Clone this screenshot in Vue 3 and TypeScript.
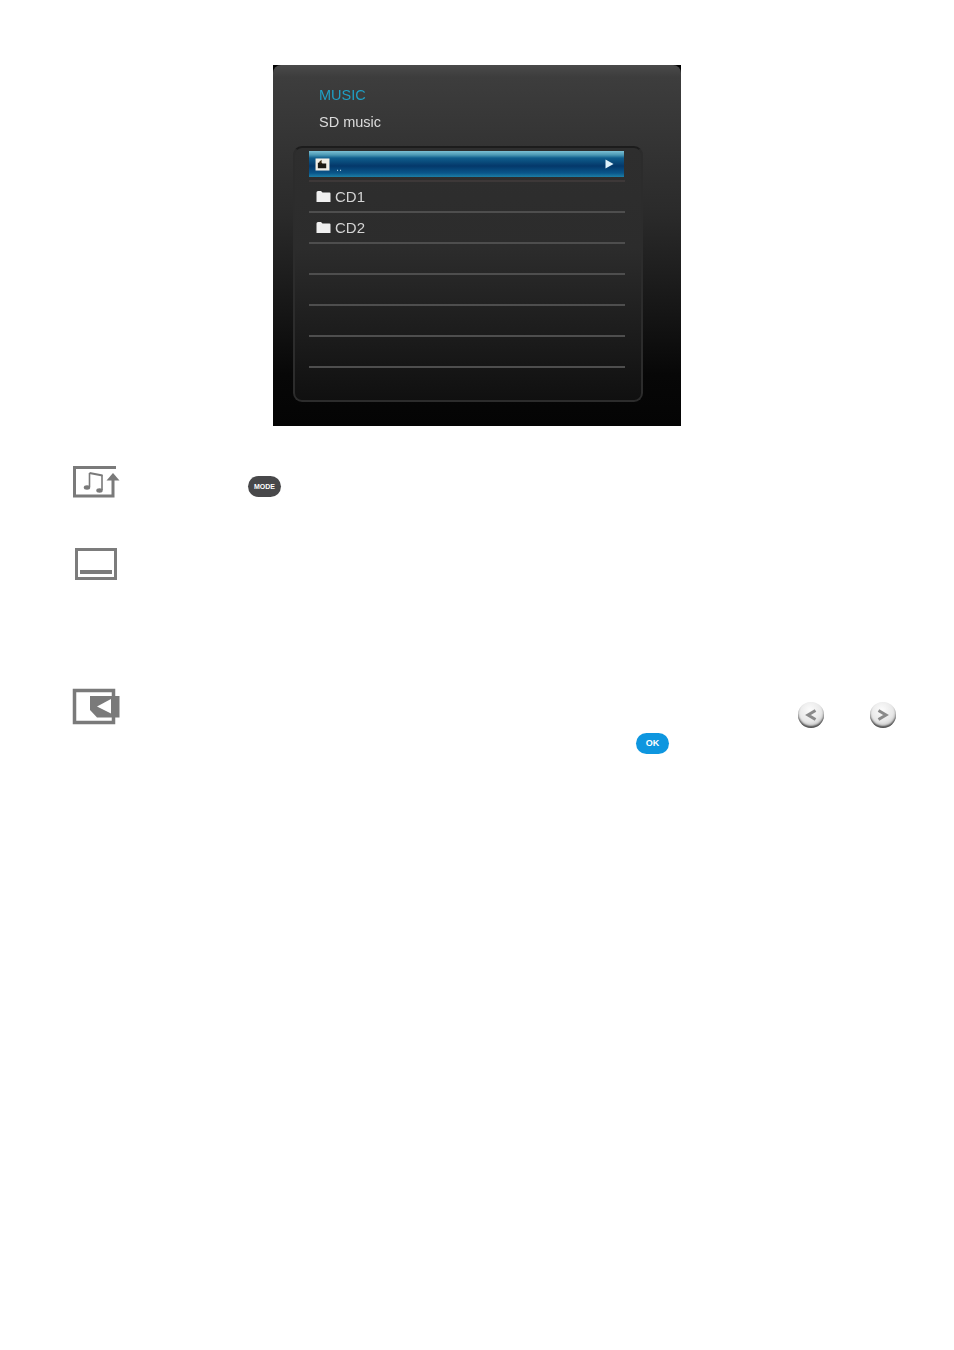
<script setup lang="ts">
const rows = ['CD1', 'CD2', '', '', '', '']
</script>

<template>
  <div class="page">
    <section class="screen">
      <div class="screen-inner">
        <div class="title">MUSIC</div>
        <div class="subtitle">SD music</div>
        <div class="panel">
          <div class="selected">
            <svg class="up-icon" width="16" height="14" viewBox="0 0 16 14">
              <rect x="0.500" y="0.500" width="15" height="13" fill="#f2efe6" />
              <path d="M3 5h4l1 1h4v5H3z" fill="#1c1a14" />
              <path d="M7 2l-3 2.500L7 7z" fill="#3a2a10" />
            </svg>
            <span class="dots">..</span>
            <svg class="play" width="9" height="10" viewBox="0 0 9 10"><path d="M0.500 0.500L8.500 5L0.500 9.500z" fill="#dff2fa" /></svg>
          </div>
          <div class="sep first"></div>
          <div v-for="(r, i) in rows" :key="i" class="row">
            <div class="row-body">
              <svg v-if="r" class="folder" width="15" height="13" viewBox="0 0 15 13">
                <path d="M0.500 2.500Q0.500 1 2 1H5L6.500 2.500H13.500Q14.500 2.500 14.500 3.500V12H0.500z" fill="#f0f0f0" />
              </svg>
              <span v-if="r" class="label">{{ r }}</span>
            </div>
            <div class="sep"></div>
          </div>
        </div>
      </div>
    </section>

    <div class="item item-music">
      <svg class="icon-music" width="50" height="34" viewBox="0 0 50 34">
        <path d="M44 2.500H2.500V31H41V14" fill="none" stroke="#7a7a7a" stroke-width="3" />
        <path d="M41 8l-6.500 7.500h13z" fill="#7a7a7a" />
        <path d="M17.500 8L30.500 10.500" stroke="#7a7a7a" stroke-width="2.200" fill="none" />
        <path d="M17.500 8V22M30 10V25" stroke="#7a7a7a" stroke-width="1.600" fill="none" />
        <ellipse cx="15" cy="22.500" rx="3.200" ry="2.200" fill="#7a7a7a" />
        <ellipse cx="27.500" cy="25.500" rx="3.200" ry="2.200" fill="#7a7a7a" />
      </svg>
      <div class="mode-btn">MODE</div>
    </div>

    <div class="item item-screen">
      <svg width="42" height="32" viewBox="0 0 42 32">
        <rect x="1.500" y="1.500" width="39" height="29" fill="none" stroke="#7c7c7c" stroke-width="3" />
        <rect x="5" y="22" width="32" height="4" fill="#7c7c7c" />
      </svg>
    </div>

    <div class="item item-back">
      <svg class="icon-back" width="48" height="38" viewBox="0 0 48 38">
        <path d="M2.500 2.500H41.500V34.500H2.500z" fill="none" stroke="#7a7a7a" stroke-width="3.500" />
        <path d="M18 8H47.500V29.500H25L18 22z" fill="#7a7a7a" />
        <path d="M39 11L25 18.500L39 25.500z" fill="#fff" />
      </svg>
      <div class="item-back-controls">
        <div class="arrows">
          <div class="round"><svg width="16" height="14" viewBox="0 0 16 14"><path d="M12.500 2.500L5 7L12.500 11.500" fill="none" stroke="#8a8a8a" stroke-width="3" /></svg></div>
          <div class="round"><svg width="16" height="14" viewBox="0 0 16 14"><path d="M3.500 2.500L11 7L3.500 11.500" fill="none" stroke="#8a8a8a" stroke-width="3" /></svg></div>
        </div>
        <div class="ok-btn">OK</div>
      </div>
    </div>
  </div>
</template>

<style>
html, body { margin: 0; background: #fff; }
</style>

<style scoped>
.page {
  width: 954px;
  height: 1350px;
  background: #fff;
  overflow: hidden;
  font-family: "Liberation Sans", Arial, sans-serif;
  display: flex;
  flex-direction: column;
}
.screen {
  width: 408px;
  height: 361px;
  margin: 65px 0 0 273px;
  background: #000;
  flex: none;
}
.screen-inner {
  height: 100%;
  box-sizing: border-box;
  padding: 21px 39px 0 20px;
  border-radius: 8px 8px 0 0;
  background: linear-gradient(180deg, #4a4a4a 0, #3d3d3d 12px, #353535 70px, #2a2a2a 150px, #161616 245px, #070707 310px, #040404 100%);
}
.title {
  margin-left: 26px;
  font-size: 14.500px;
  line-height: 18px;
  color: #1f9fc4;
  filter: blur(0.6px);
}
.subtitle {
  margin: 9px 0 0 26px;
  font-size: 14.500px;
  line-height: 18px;
  color: #dcdcdc;
  filter: blur(0.6px);
}
.panel {
  height: 256px;
  width: 350px;
  box-sizing: border-box;
  margin-top: 15px;
  padding: 3px 15px 0 14px;
  border: 2px solid #2c2c2c;
  border-top-color: #1c1c1c;
  border-radius: 9px;
  background: linear-gradient(180deg, #2e2e2e 0, #2c2c2c 100px, #1f1f1f 170px, #101010 100%);
}
.selected {
  height: 26px;
  width: 315px;
  display: flex;
  align-items: center;
  padding-left: 6px;
  box-sizing: border-box;
  background: linear-gradient(180deg, #7cc0d4 0, #4a98b4 4px, #0f5d8c 7px, #04386a 15px, #0a568a 22px, #1d7fa6 100%);
}
.up-icon { width: 15px; height: 13px; filter: blur(0.5px); }
.dots {
  margin: 6px 0 0 6px;
  color: #9fc4d8;
  font-size: 11px;
  line-height: 12px;
  filter: blur(0.4px);
}
.play { margin: 0 10px 0 auto; filter: blur(0.5px); }
.sep {
  height: 2px;
  width: 316px;
  background: #4e4e4e;
}
.sep.first { margin-top: 3px; background: #3d3838; }
.row { width: 316px; }
.row-body {
  height: 29px;
  display: flex;
  align-items: center;
  padding-left: 7px;
  box-sizing: border-box;
}
.folder { width: 15px; height: 13px; filter: blur(0.4px); }
.label {
  margin-left: 4px;
  color: #d4d4d4;
  font-size: 15px;
  line-height: 18px;
  filter: blur(0.6px);
}
.item { flex: none; }
.item-music {
  margin: 39px 0 0 72px;
  height: 34px;
  display: flex;
  align-items: flex-start;
}
.mode-btn {
  width: 33px;
  height: 21px;
  margin: 11px 0 0 126px;
  border-radius: 11px;
  background: #48484a;
  color: #fff;
  font-size: 7px;
  font-weight: 700;
  line-height: 21px;
  text-align: center;
}
.item-screen {
  margin: 49px 0 0 75px;
  height: 32px;
}
.item-back {
  margin: 108px 0 0 72px;
  display: flex;
  align-items: flex-start;
}
.icon-back { flex: none; }
.item-back-controls {
  width: 776px;
  margin-left: 2px;
  padding-top: 14px;
}
.arrows {
  display: flex;
  gap: 46px;
  margin-left: 676px;
}
.round {
  width: 26px;
  height: 26px;
  border-radius: 50%;
  display: flex;
  align-items: center;
  justify-content: center;
  background: radial-gradient(circle at 45% 30%, #fbfbfb 0, #e8e8e8 50%, #c4c4c4 80%, #8a8a8a 100%);
  box-shadow: inset 0 -2px 2px #4f4f4f;
}
.ok-btn {
  width: 33px;
  height: 21px;
  margin: 5px 0 0 514px;
  border-radius: 11px;
  background: #0e96df;
  color: #fff;
  font-size: 9px;
  font-weight: 700;
  line-height: 21px;
  text-align: center;
}
</style>
